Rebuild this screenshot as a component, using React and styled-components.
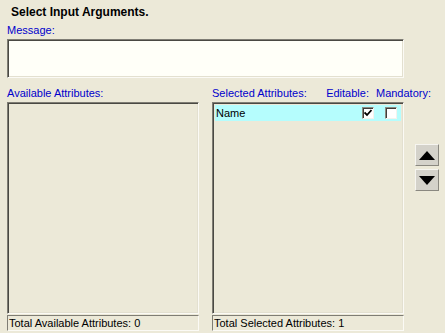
import React from 'react';
import styled, { createGlobalStyle } from 'styled-components';

const GlobalStyle = createGlobalStyle`
  html, body {
    margin: 0;
    padding: 0;
    background: #ece9d8;
  }
  body {
    font-family: 'Liberation Sans', Arial, sans-serif;
    font-size: 11px;
  }
`;

const Page = styled.div`
  width: 445px;
  height: 333px;
  box-sizing: border-box;
  padding: 4px 0 0 7px;
  background: #ece9d8;
  overflow: hidden;
`;

const Title = styled.div`
  font-weight: bold;
  font-size: 12px;
  color: #000;
  height: 19px;
  line-height: 16px;
  padding-left: 4px;
`;

const Label = styled.div`
  color: #0000cc;
  font-size: 11px;
  line-height: 14px;
  height: 14px;
  white-space: nowrap;
  margin-right: ${p => p.$mr || 0}px;
`;

const Sunken = styled.div`
  box-sizing: border-box;
  border-style: solid;
  border-width: 1px;
  border-color: #7f7d74 #fbfaf5 #fbfaf5 #7f7d74;
  box-shadow: inset 1px 1px 0 #4a4943, inset -1px -1px 0 #e3e0d0;
`;

const MessageBox = styled(Sunken)`
  width: 397px;
  height: 39px;
  margin-top: 2px;
  background: #fffff8;
`;

const Columns = styled.div`
  display: flex;
  margin-top: 8px;
`;

const Column = styled.div`
  display: flex;
  flex-direction: column;
  width: ${p => p.$w}px;
  margin-right: ${p => p.$gap || 0}px;
`;

const HeadRow = styled.div`
  display: flex;
  align-items: center;
  width: ${p => (p.$wide ? 'calc(100% + 28px)' : '100%')};
  height: 14px;
  margin-bottom: 2px;
`;

const Spacer = styled.div`
  flex: 1;
`;

const List = styled(Sunken)`
  height: 212px;
  padding: 2px;
  background: #ece9d8;
`;

const Row = styled.div`
  display: flex;
  align-items: center;
  height: 16px;
  background: #b5fdfd;
  padding-left: 1px;
  color: #000;
`;

const Box = styled.div`
  box-sizing: border-box;
  width: 12px;
  height: 12px;
  margin-right: ${p => p.$mr}px;
  background: #fff;
  border-style: solid;
  border-width: 1px;
  border-color: #8c8a80 #f4f3ee #f4f3ee #8c8a80;
  box-shadow: inset 1px 1px 0 #3f3e3a;
  display: flex;
  align-items: center;
  justify-content: center;
`;

const Status = styled.div`
  box-sizing: border-box;
  height: 16px;
  margin-top: 1px;
  border-style: solid;
  border-width: 1px;
  border-color: #7f7d74 #fbfaf5 #fbfaf5 #7f7d74;
  line-height: 14px;
  padding-left: 1px;
  color: #000;
  white-space: nowrap;
`;

const Arrows = styled.div`
  display: flex;
  flex-direction: column;
  gap: 3px;
  padding-top: 58px;
`;

const ArrowButton = styled.div`
  box-sizing: border-box;
  width: 24px;
  height: 22px;
  background: #d4d2ca;
  border-style: solid;
  border-width: 1px;
  border-color: #f6f5f0 #8a8880 #8a8880 #f6f5f0;
  display: flex;
  align-items: center;
  justify-content: center;
`;

const Check = () => (
  <svg width="8" height="8" viewBox="0 0 8 8">
    <path d="M0.5 3.5 L3 6 L7.5 1" stroke="#000" strokeWidth="1.8" fill="none" />
  </svg>
);

const Tri = ({ up }) => (
  <svg width="16" height="9" viewBox="0 0 16 9">
    <path d={up ? 'M0 9 L8 0 L16 9 Z' : 'M0 0 L16 0 L8 9 Z'} fill="#000" />
  </svg>
);

export default function App() {
  return (
    <Page>
      <GlobalStyle />
      <Title>Select Input Arguments.</Title>
      <Label>Message:</Label>
      <MessageBox />
      <Columns>
        <Column $w={192} $gap={13}>
          <HeadRow>
            <Label>Available Attributes:</Label>
          </HeadRow>
          <List />
          <Status>Total Available Attributes: 0</Status>
        </Column>
        <Column $w={192} $gap={11}>
          <HeadRow $wide>
            <Label>Selected Attributes:</Label>
            <Spacer />
            <Label $mr={7}>Editable:</Label>
            <Label $mr={1}>Mandatory:</Label>
          </HeadRow>
          <List>
            <Row>
              Name
              <Spacer />
              <Box $mr={11}>
                <Check />
              </Box>
              <Box $mr={4} />
            </Row>
          </List>
          <Status>Total Selected Attributes: 1</Status>
        </Column>
        <Arrows>
          <ArrowButton>
            <Tri up />
          </ArrowButton>
          <ArrowButton>
            <Tri />
          </ArrowButton>
        </Arrows>
      </Columns>
    </Page>
  );
}
